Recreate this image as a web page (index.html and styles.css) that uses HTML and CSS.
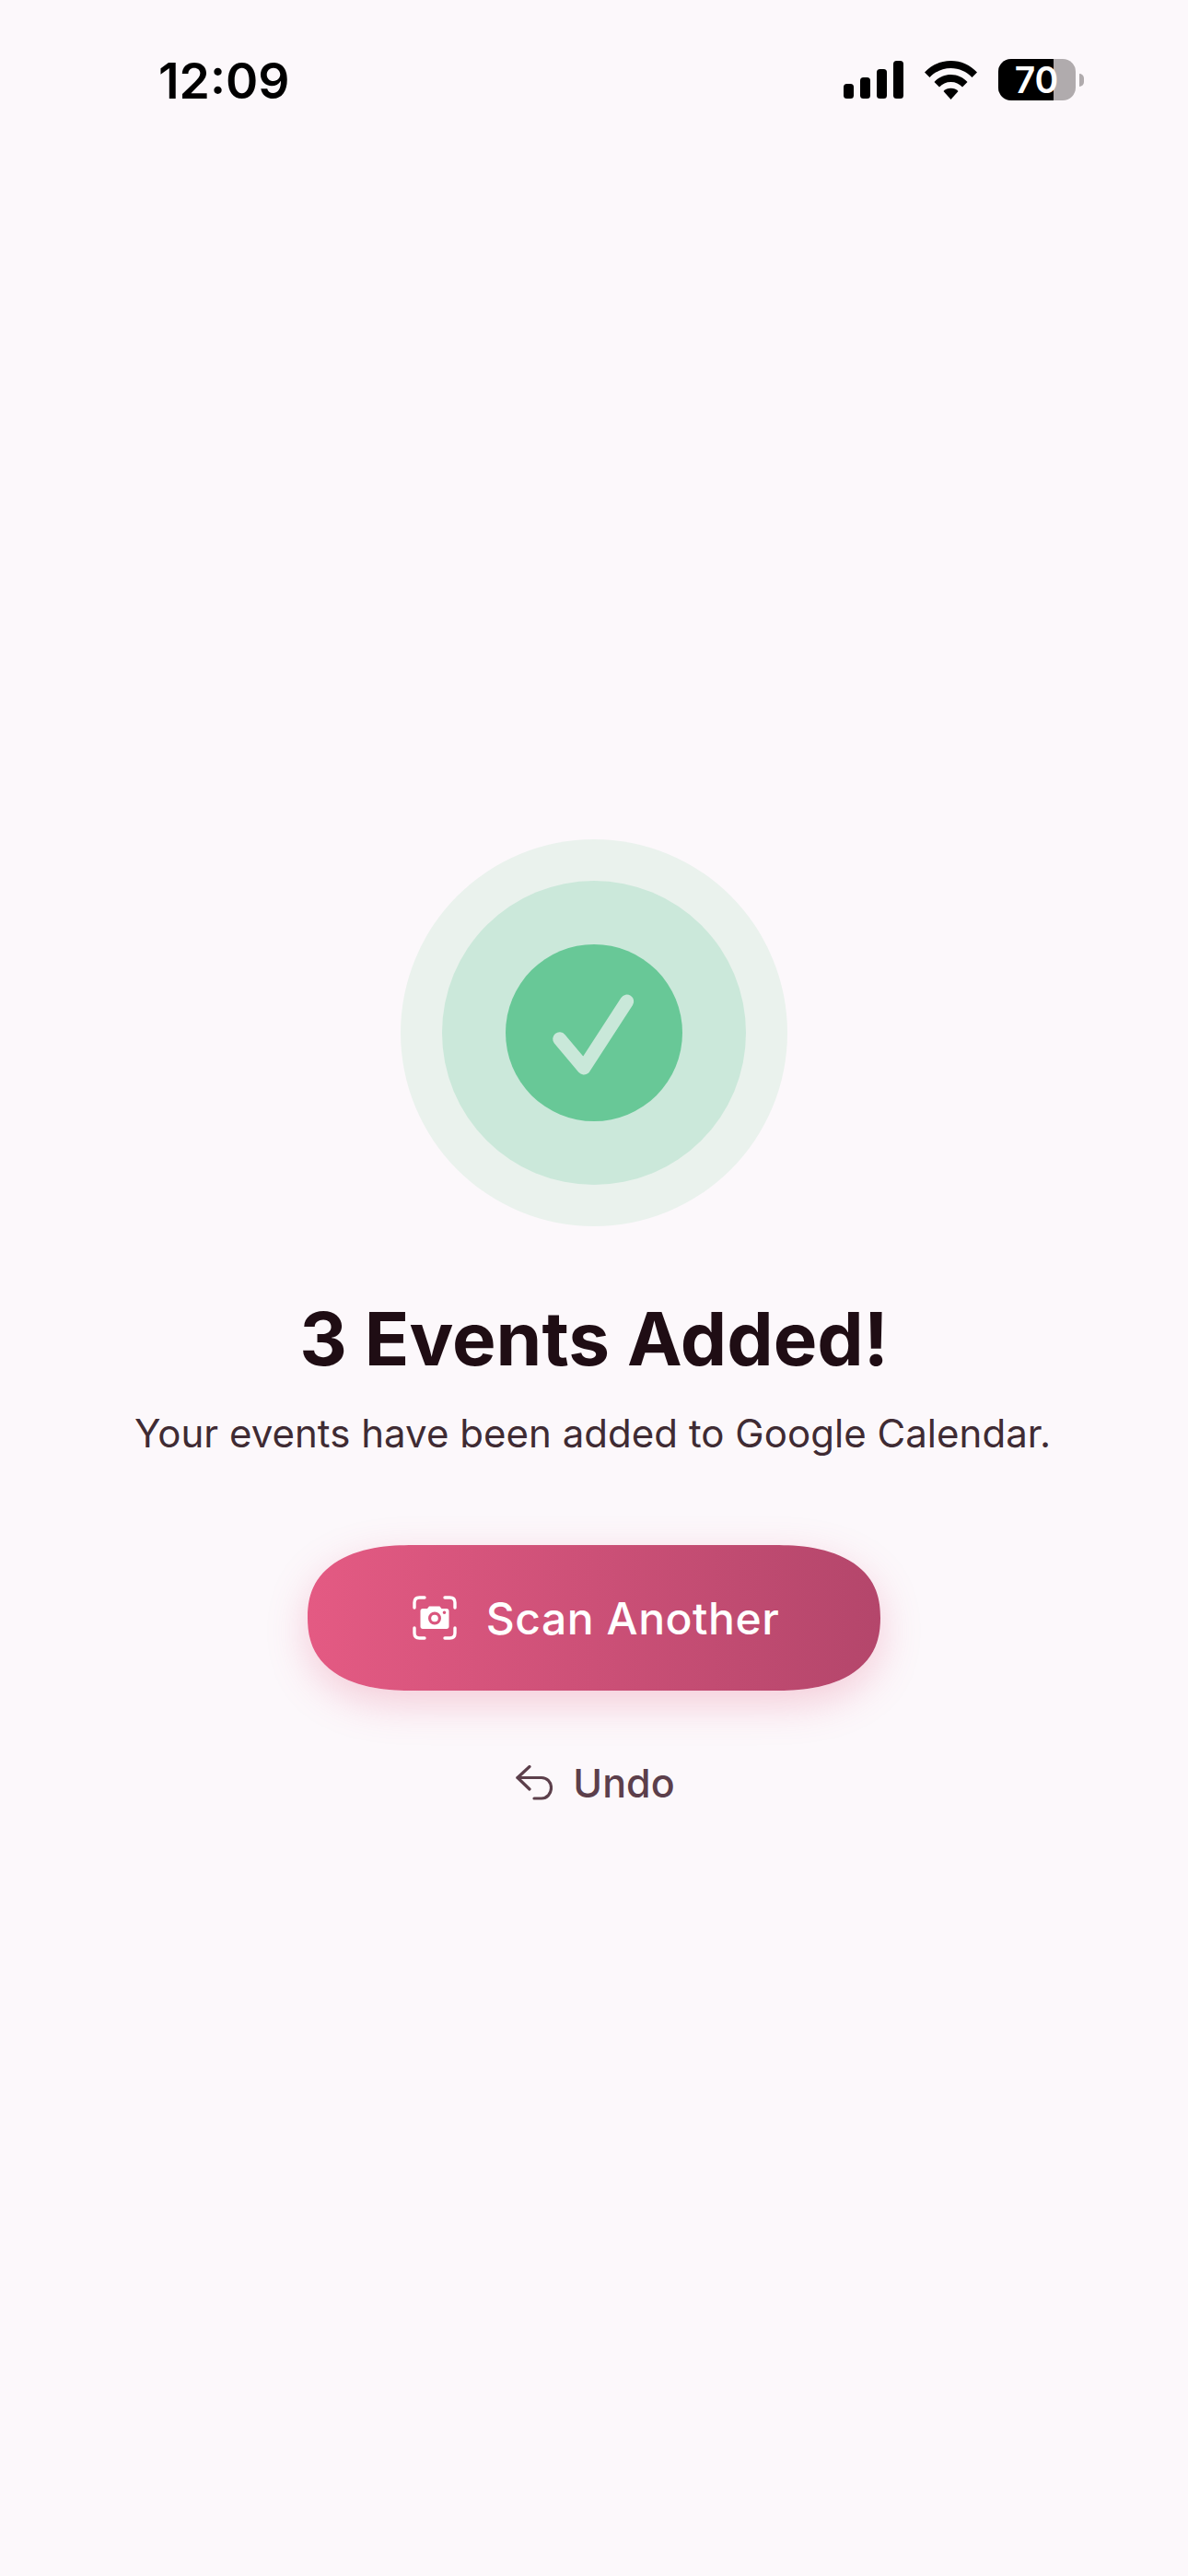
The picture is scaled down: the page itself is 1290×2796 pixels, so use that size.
FILE: index.html
```html
<!DOCTYPE html>
<html lang="en">
<head>
<meta charset="utf-8">
<title>Events Added</title>
<link rel="stylesheet" href="styles.css">
</head>
<body>
<div class="screen">
  <header class="status">
    <span class="time">12:09</span>
    <div class="status-icons">
      <svg class="signal" width="65" height="41" viewBox="0 0 65 41" fill="#000">
        <rect x="0" y="25" width="11" height="16" rx="3.5"/>
        <rect x="18" y="18" width="11" height="23" rx="3.5"/>
        <rect x="36" y="9" width="11" height="32" rx="3.5"/>
        <rect x="54" y="0" width="11" height="41" rx="3.5"/>
      </svg>
      <svg class="wifi" width="57" height="42" viewBox="0 0 57 42" fill="#000">
        <path d="M0 12.5C7.5 4.5 17.500 0 28.500 0S49.500 4.500 57 12.500L51.500 18C45.500 11.800 37.500 8 28.500 8S11.500 11.800 5.500 18Z"/>
        <path d="M10.500 23C15 18 21.300 15 28.500 15S42 18 46.500 23L41 28.500C37.800 25 33.500 23 28.500 23S19.200 25 16 28.500Z"/>
        <path d="M20.500 33C22.500 31 25.300 29.800 28.500 29.800S34.500 31 36.500 33L28.500 42Z"/>
      </svg>
      <div class="battery">
        <div class="battery-body">
          <div class="battery-fill"></div>
          <span class="battery-level">70</span>
        </div>
        <div class="battery-nub"></div>
      </div>
    </div>
  </header>

  <main class="content">
    <div class="ring-outer">
      <div class="ring-middle">
        <div class="ring-inner">
          <svg width="192" height="192" viewBox="0 0 192 192" fill="none">
            <path d="M58.700 102.700L85 134L131.700 62" stroke="#c9e8d9" stroke-width="15" stroke-linecap="round" stroke-linejoin="round"/>
          </svg>
        </div>
      </div>
    </div>
    <h1 class="title">3 Events Added!</h1>
    <p class="subtitle">Your events have been added to Google Calendar.</p>
    <button class="primary" type="button">
      <svg width="48" height="48" viewBox="0 0 48 48" fill="none">
        <g stroke="#fff" stroke-width="3.400" stroke-linecap="round">
          <path d="M2 13V7.500C2 4 4 2 7.500 2H13"/>
          <path d="M35 2H40.500C44 2 46 4 46 7.500V13"/>
          <path d="M46 35V40.500C46 44 44 46 40.500 46H35"/>
          <path d="M13 46H7.500C4 46 2 44 2 40.500V35"/>
        </g>
        <path fill-rule="evenodd" fill="#fff" d="M11 14H16L18 11.500H29.500L31.500 14H37C38.500 14 39.500 15 39.500 16.500V33.500C39.500 35 38.500 36 37 36H11C9.500 36 8.500 35 8.500 33.500V16.500C8.500 15 9.500 14 11 14ZM24 17.500A7 7 0 1 0 24 31.500A7 7 0 1 0 24 17.500ZM34.500 16.500A1.800 1.800 0 1 0 34.500 20.100A1.800 1.800 0 1 0 34.500 16.500Z"/>
        <circle cx="24" cy="24.500" r="3.800" fill="#fff"/>
      </svg>
      <span>Scan Another</span>
    </button>
    <button class="undo" type="button">
      <svg width="40" height="38" viewBox="0 0 40 38" fill="none" stroke="#5c3f4b" stroke-width="3.200" stroke-linecap="round" stroke-linejoin="round">
        <path d="M15 1.500L2 13.500L15 26"/>
        <path d="M2 13.500H28C34 13.500 38.500 18 38.500 24.500C38.500 31 34 36 28 36H20"/>
      </svg>
      <span>Undo</span>
    </button>
  </main>
</div>
</body>
</html>
```
FILE: styles.css
```css
* { box-sizing: border-box; }
html, body { margin: 0; padding: 0; }
body {
  background: #fcf8fb;
  font-family: "Inter", "Liberation Sans", sans-serif;
}
.screen {
  width: 1290px;
  height: 2796px;
  display: flex;
  flex-direction: column;
  background: #fcf8fb;
}
.status {
  height: 176px;
  padding: 56px 113px 0 172px;
  display: flex;
  justify-content: space-between;
  align-items: flex-start;
}
.time {
  font-size: 53.500px;
  line-height: 64px;
  font-weight: 600;
  color: #000;
}
.status-icons {
  display: flex;
  align-items: center;
  gap: 23px;
  padding-top: 8px;
}
.wifi { display: block; }
.signal { display: block; }
.battery { display: flex; align-items: center; gap: 4px; }
.battery-body {
  position: relative;
  width: 84px;
  height: 45px;
  border-radius: 14px;
  background: #b0abad;
  overflow: hidden;
  display: flex;
  align-items: center;
  justify-content: center;
}
.battery-fill {
  position: absolute;
  left: 0;
  top: 0;
  bottom: 0;
  width: 60px;
  background: #000;
}
.battery-level {
  position: relative;
  font-size: 39px;
  font-weight: 600;
  line-height: 45px;
  color: #fff;
  margin-right: 1px;
}
.battery-nub {
  width: 5px;
  height: 14px;
  background: #b0abad;
  border-radius: 0 7px 7px 0;
}
.content {
  display: flex;
  flex-direction: column;
  align-items: center;
  padding-top: 735px;
}
.ring-outer, .ring-middle, .ring-inner {
  border-radius: 50%;
  display: flex;
  align-items: center;
  justify-content: center;
}
.ring-outer { width: 420px; height: 420px; background: #eaf2ed; }
.ring-middle { width: 330px; height: 330px; background: #cbe8da; }
.ring-inner { width: 192px; height: 192px; background: #68c897; }
.title {
  margin: 74px 0 0;
  font-size: 80px;
  line-height: 96px;
  font-weight: 700;
  color: #1f0d14;
}
.subtitle {
  margin: 27px 3px 0 0;
  font-size: 42px;
  line-height: 56px;
  font-weight: 400;
  letter-spacing: 0.030px;
  color: #3f2b33;
}
.primary {
  margin-top: 93px;
  width: 622px;
  height: 158px;
  border: 0;
  border-radius: 115px / 79px;
  corner-shape: superellipse(1.26);
  background: linear-gradient(90deg, #e45a83, #b4466b);
  box-shadow: 0 14px 44px rgba(226, 90, 130, 0.28);
  color: #fff;
  font-family: inherit;
  font-size: 48px;
  font-weight: 550;
  letter-spacing: 0.550px;
  display: flex;
  align-items: center;
  justify-content: center;
  gap: 32px;
  padding: 0 0 0 4px;
}
.undo {
  margin-top: 72px;
  border: 0;
  background: none;
  padding: 0 0 0 3px;
  color: #5c3f4b;
  font-family: inherit;
  font-size: 43px;
  line-height: 56px;
  font-weight: 500;
  display: flex;
  align-items: center;
  gap: 22px;
}
```
